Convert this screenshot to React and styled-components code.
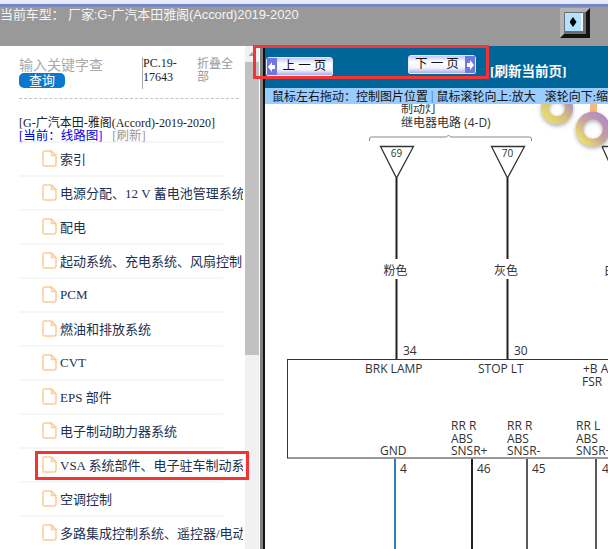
import React from 'react';
import styled, { createGlobalStyle } from 'styled-components';

const GlobalStyle = createGlobalStyle`
  html, body {
    margin: 0;
    padding: 0;
    background: #fff;
  }
  * {
    box-sizing: border-box;
  }
`;

const serif = `"Liberation Serif", "Noto Sans CJK SC", serif`;
const sans = `"Liberation Sans", "Noto Sans CJK SC", sans-serif`;

const Page = styled.div`
  position: relative;
  width: 608px;
  height: 549px;
  overflow: hidden;
  font-family: ${serif};
`;

const TopStrip = styled.div`
  height: 7px;
  background: linear-gradient(#eef0fb 0, #e2e6f8 4px, #6f86cf 4px, #6f86cf 6px, #8f93a8 7px);
`;

const Header = styled.header`
  display: flex;
  justify-content: space-between;
  align-items: flex-start;
  height: 39px;
  padding-right: 18px;
  background: #999;
`;

const CarInfo = styled.div`
  font-family: ${sans};
  font-size: 13px;
  letter-spacing: -0.1px;
  line-height: 16px;
  color: #f4f4f4;
  white-space: nowrap;
`;

const ToggleButton = styled.button`
  display: flex;
  width: 30px;
  height: 30px;
  margin-top: 1px;
  padding: 0;
  background: #6e6e6e;
  border-style: solid;
  border-width: 4px;
  border-color: #b4b4b4 #141414 #141414 #b4b4b4;
`;

const ToggleWindow = styled.span`
  display: flex;
  align-items: center;
  justify-content: center;
  width: 18px;
  height: 18px;
  margin: 1px;
  background: #b2e2ff;
  border-right: 2px solid #f4f4f4;

  &::before {
    content: '';
    width: 7px;
    height: 10px;
    background: #000;
    clip-path: polygon(50% 0, 100% 50%, 50% 100%, 0 50%);
  }
`;

const Body = styled.div`
  display: flex;
  height: 503px;
`;

const Sidebar = styled.aside`
  width: 243px;
  flex: none;
  overflow: hidden;
`;

const SearchRow = styled.div`
  display: flex;
  height: 52px;
  margin-left: 19px;
  padding-top: 10px;
`;

const SearchBox = styled.div`
  width: 123px;
  flex: none;
`;

const KeywordInput = styled.input`
  display: block;
  width: 85px;
  height: 17px;
  padding: 3px 0 0;
  border: none;
  outline: none;
  font-family: ${serif};
  font-size: 14px;

  &::placeholder {
    color: #aaa;
    opacity: 1;
  }
`;

const SearchButton = styled.button`
  display: block;
  width: 46px;
  height: 15px;
  padding: 0;
  border: none;
  border-radius: 5px;
  background: #0a78cf;
  color: #fff;
  font-family: ${serif};
  font-size: 13px;
  line-height: 15px;
`;

const PartNo = styled.div`
  width: 55px;
  height: 32px;
  flex: none;
  margin-top: 1px;
  border-left: 1px solid #aaa;
  font-size: 12px;
  line-height: 13.5px;
  color: #222;

  span {
    display: block;
    width: 40px;
  }
`;

const CollapseAll = styled.div`
  width: 38px;
  margin-top: 2px;
  font-size: 12px;
  line-height: 13px;
  color: #999;
`;

const DashedLine = styled.div`
  width: 220px;
  margin-left: 19px;
  border-top: 1px dashed #c4c4c4;
`;

const CurrentCar = styled.div`
  margin: 18px 0 0 19px;
  font-size: 12px;
  line-height: 13px;
  color: #222;
  white-space: nowrap;
`;

const CurrentPage = styled.div`
  display: flex;
  gap: 10px;
  margin-left: 19px;
  font-size: 12.5px;
  line-height: 13px;
  color: #0000e6;
`;

const Refresh = styled.span`
  color: #999;
`;

const List = styled.div`
  width: 204px;
  margin: -2px 0 0 19px;
  border-top: 2px solid #f6f6f6;
`;

const Row = styled.div`
  display: flex;
  align-items: center;
  gap: 3px;
  height: 34px;
  padding: 0 0 1px 23px;
  border-bottom: 2px solid #f6f6f6;
  font-size: 13px;
  color: #1c3050;
  white-space: nowrap;
`;

const Scrollbar = styled.div`
  width: 17px;
  flex: none;
  padding-left: 2px;
  background: linear-gradient(90deg, #fff 2px, #f1f1f1 2px, #f1f1f1 16px, #fff 16px);
`;

const ScrollArrow = styled.div`
  display: flex;
  justify-content: center;
  width: 14px;
  height: 16px;
  padding-top: 6px;

  &::before {
    content: '';
    width: 7px;
    height: 4px;
    background: #a3a3a3;
    clip-path: polygon(50% 0, 100% 100%, 0 100%);
  }
`;

const ScrollThumb = styled.div`
  width: 14px;
  height: 293px;
  background: #c1c1c1;
`;

const Divider = styled.div`
  width: 5px;
  flex: none;
  background: linear-gradient(90deg, #808080 3px, #111 3px);
`;

const Viewer = styled.main`
  display: flex;
  flex-direction: column;
  flex: 1;
  min-width: 0;
`;

const NavBar = styled.div`
  display: flex;
  align-items: flex-start;
  height: 42px;
  padding: 9px 0 0 1px;
  background: #006699;
`;

const PageButton = styled.button`
  display: flex;
  flex-direction: ${(p) => (p.$next ? 'row-reverse' : 'row')};
  align-items: stretch;
  width: ${(p) => (p.$next ? '68px' : '67px')};
  height: 19px;
  margin-top: ${(p) => (p.$next ? '0' : '2px')};
  margin-left: ${(p) => (p.$next ? '75px' : '0')};
  padding: 0;
  border: 1px solid #e4e6fb;
  border-radius: 3px 3px 2px 2px;
  background: linear-gradient(#c5c8f2, #fff 35%, #f2f3fe 70%, #a9adea);
  color: #111;
  font-family: ${serif};
  font-size: 12.5px;
`;

const ArrowCap = styled.span`
  display: flex;
  align-items: center;
  justify-content: center;
  width: 10px;
  background: #6f77e0;
`;

const PageLabel = styled.span`
  flex: 1;
  line-height: 17px;
  text-align: center;
`;

const RefreshPage = styled.span`
  margin: 9px 0 0 14px;
  font-size: 13.5px;
  font-weight: 700;
  line-height: 15px;
  color: #fff;
  white-space: nowrap;
`;

const InfoBar = styled.div`
  display: flex;
  align-items: center;
  height: 16px;
  padding-left: 7px;
  background: #99ccff;
  font-size: 12px;
  color: #111;
  white-space: nowrap;
  overflow: hidden;
`;

const InfoPipe = styled.span`
  margin: 0 3px;
  color: #336699;
`;

const DiagramArea = styled.div`
  flex: 1;
  overflow: hidden;
  background: #fff;
`;

const DiagramSvg = styled.svg`
  display: block;
  font-family: "Open Sans", "Noto Sans CJK SC", sans-serif;
`;

const Callout = styled.div`
  position: absolute;
  left: ${(p) => p.$x}px;
  top: ${(p) => p.$y}px;
  width: ${(p) => p.$w}px;
  height: ${(p) => p.$h}px;
  border: 3px solid #f33434;
  pointer-events: none;
`;

const MENU = [
  '索引',
  '电源分配、12 V 蓄电池管理系统',
  '配电',
  '起动系统、充电系统、风扇控制',
  'PCM',
  '燃油和排放系统',
  'CVT',
  'EPS 部件',
  '电子制动助力器系统',
  'VSA 系统部件、电子驻车制动系统',
  '空调控制',
  '多路集成控制系统、遥控器/电动车窗',
];

function FileIcon() {
  return (
    <svg width="15" height="17" viewBox="0 0 15 17" fill="none" style={{ flex: 'none' }}>
      <path
        d="M2.5 1h7L14 5.5V14a2 2 0 0 1-2 2H2.5a1.5 1.5 0 0 1-1.5-1.5v-12A1.5 1.5 0 0 1 2.5 1zM9.5 1v4.5H14"
        stroke="#fdcb95"
        strokeWidth="1.5"
        strokeLinejoin="round"
      />
    </svg>
  );
}

function Arrow({ next }) {
  return (
    <svg width="8" height="10" viewBox="0 0 8 10">
      <path d={next ? 'M1 3h3V0l4 5-4 5V7H1z' : 'M7 3H4V0L0 5l4 5V7h3z'} fill="#fff" />
    </svg>
  );
}

function Ring({ cx, cy, r, w, grad }) {
  return <circle cx={cx} cy={cy} r={r} fill="none" stroke={`url(#${grad})`} strokeWidth={w} filter="url(#ringShadow)" />;
}

// Page coordinates minus the area's origin (265, 104)
function Diagram() {
  const ink = '#333';
  const T = ({ x, y, children, size = 12, anchor = 'start' }) => (
    <text x={x - 265} y={y - 104} fontSize={size} fill={ink} textAnchor={anchor}>
      {children}
    </text>
  );
  const L = ({ x, y1, y2, w = 2, c = '#222' }) => (
    <line x1={x - 265} x2={x - 265} y1={y1 - 104} y2={y2 - 104} stroke={c} strokeWidth={w} />
  );
  const Tri = ({ x }) => (
    <path d={`M${x - 281} 42.5h33L${x - 265} 74z`} fill="#fff" stroke="#333" strokeWidth="1.3" />
  );

  return (
    <DiagramSvg width="343" height="445" viewBox="0 0 343 445">
      <defs>
        <linearGradient id="ringA" x1="0" y1="1" x2="1" y2="0">
          <stop offset="0" stopColor="#e8e070" />
          <stop offset="0.45" stopColor="#d8c078" />
          <stop offset="1" stopColor="#a888c8" />
        </linearGradient>
        <linearGradient id="ringB" x1="0" y1="1" x2="1" y2="0">
          <stop offset="0" stopColor="#f0e860" />
          <stop offset="0.5" stopColor="#c8a0a0" />
          <stop offset="1" stopColor="#b088c8" />
        </linearGradient>
        <filter id="ringShadow" x="-40%" y="-40%" width="180%" height="180%">
          <feDropShadow dx="0" dy="2" stdDeviation="2" floodColor="#777" floodOpacity="0.6" />
        </filter>
      </defs>

      <path d="M329 -4l-1 16" stroke="#f4b878" strokeWidth="7" />
      <Ring cx={292} cy={4} r={12} w={8} grad="ringA" />
      <Ring cx={328} cy={25} r={13.5} w={7.5} grad="ringB" />

      <T x={401} y={113} size={12}>制动灯</T>
      <T x={401} y={127} size={12}>继电器电路 (4-D)</T>
      <path
        d="M104.5 37v-2q0-2 2-2h75l2-2 2 2h79q2 0 2 2v2"
        fill="none"
        stroke="#888"
        strokeWidth="1"
      />

      <Tri x={396.5} />
      <Tri x={507.5} />
      <path d="M337 42.5h10M337 42.5l10 22" fill="none" stroke="#333" strokeWidth="1.3" />
      <T x={396.5} y={157} size={10} anchor="middle">69</T>
      <T x={507.5} y={157} size={10} anchor="middle">70</T>

      <L x={396.5} y1={178} y2={259} />
      <L x={507.5} y1={178} y2={259} />
      <T x={395.5} y={275} size={12} anchor="middle">粉色</T>
      <T x={506} y={275} size={12} anchor="middle">灰色</T>
      <T x={604} y={275} size={12}>白色</T>
      <L x={396.5} y1={279} y2={359} />
      <L x={507.5} y1={279} y2={359} />

      <rect x={22.5} y={255.5} width={340} height={98.5} fill="none" stroke="#333" strokeWidth="1" />

      <T x={403} y={355} size={12}>34</T>
      <T x={514} y={355} size={12}>30</T>
      <T x={365} y={373} size={12}>BRK LAMP</T>
      <T x={478} y={373} size={12}>STOP LT</T>
      <T x={583} y={373} size={12}>+B ABS</T>
      <T x={582} y={386} size={12}>FSR</T>

      <T x={451} y={430} size={12}>RR R</T>
      <T x={451} y={443} size={12}>ABS</T>
      <T x={451} y={455} size={12}>SNSR+</T>
      <T x={507} y={430} size={12}>RR R</T>
      <T x={507} y={443} size={12}>ABS</T>
      <T x={507} y={455} size={12}>SNSR-</T>
      <T x={576} y={430} size={12}>RR L</T>
      <T x={576} y={443} size={12}>ABS</T>
      <T x={576} y={455} size={12}>SNSR+</T>
      <T x={380} y={455} size={12}>GND</T>

      <L x={395} y1={459} y2={549} c="#2e7fb8" />
      <L x={472} y1={459} y2={549} />
      <L x={527} y1={459} y2={549} w={1.5} />
      <L x={596} y1={459} y2={549} w={1.5} />
      <T x={400} y={473} size={12}>4</T>
      <T x={477} y={473} size={12}>46</T>
      <T x={532} y={473} size={12}>45</T>
      <T x={602} y={473} size={12}>44</T>
    </DiagramSvg>
  );
}

export default function App() {
  return (
    <Page>
      <GlobalStyle />
      <TopStrip />
      <Header>
        <CarInfo>当前车型： 厂家:G-广汽本田雅阁(Accord)2019-2020</CarInfo>
        <ToggleButton>
          <ToggleWindow />
        </ToggleButton>
      </Header>
      <Body>
        <Sidebar>
          <SearchRow>
            <SearchBox>
              <KeywordInput placeholder="输入关键字查询" />
              <SearchButton>查询</SearchButton>
            </SearchBox>
            <PartNo>
              <span>PC.19-17643</span>
            </PartNo>
            <CollapseAll>折叠全部</CollapseAll>
          </SearchRow>
          <DashedLine />
          <CurrentCar>[G-广汽本田-雅阁(Accord)-2019-2020]</CurrentCar>
          <CurrentPage>
            <span>[当前：线路图]</span>
            <Refresh>[刷新]</Refresh>
          </CurrentPage>
          <List>
            {MENU.map((item) => (
              <Row key={item}>
                <FileIcon />
                {item}
              </Row>
            ))}
          </List>
        </Sidebar>
        <Scrollbar>
          <ScrollArrow />
          <ScrollThumb />
        </Scrollbar>
        <Divider />
        <Viewer>
          <NavBar>
            <PageButton>
              <ArrowCap>
                <Arrow />
              </ArrowCap>
              <PageLabel>上 一 页</PageLabel>
            </PageButton>
            <PageButton $next>
              <ArrowCap>
                <Arrow next />
              </ArrowCap>
              <PageLabel>下 一 页</PageLabel>
            </PageButton>
            <RefreshPage>[刷新当前页]</RefreshPage>
          </NavBar>
          <InfoBar>
            鼠标左右拖动：控制图片位置
            <InfoPipe>|</InfoPipe>
            鼠标滚轮向上:放大&nbsp;&nbsp;&nbsp;滚轮向下:缩小
          </InfoBar>
          <DiagramArea>
            <Diagram />
          </DiagramArea>
        </Viewer>
      </Body>
      <Callout $x={253} $y={45} $w={236} $h={34} />
      <Callout $x={35} $y={451} $w={214} $h={29} />
    </Page>
  );
}
